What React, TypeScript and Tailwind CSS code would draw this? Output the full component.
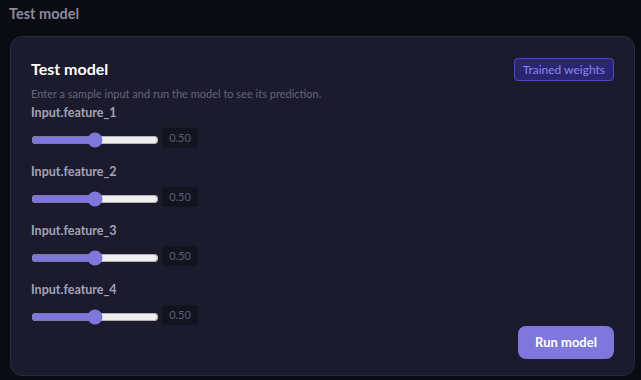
import { useState } from 'react'

const features = ['Input.feature_1', 'Input.feature_2', 'Input.feature_3', 'Input.feature_4']

function FeatureSlider({ name }: { name: string }) {
  const [value, setValue] = useState(0.5)
  return (
    <div className="flex flex-col">
      <label className="text-[12.5px] font-bold leading-4 text-[#a3a3b8]">{name}</label>
      <div className="mt-[6px] flex items-start gap-[2px]">
        <input
          type="range"
          min={0}
          max={1}
          step={0.01}
          value={value}
          onChange={(e) => setValue(Number(e.target.value))}
          className="mt-[5px] h-[16px] w-[128px] accent-[#8077dd]"
        />
        <div className="flex h-[22px] w-[38px] items-center justify-center rounded-[4px] border border-[#1c1c2c] bg-[#141421] text-[11px] text-[#5f5f72]">
          {value.toFixed(2)}
        </div>
      </div>
    </div>
  )
}

export default function App() {
  return (
    <div
      className="flex h-[380px] flex-col bg-[#0b0b12] pl-[10px] pr-[6px]"
      style={{ fontFamily: 'Lato, "Noto Sans", sans-serif' }}
    >
      <div className="flex h-[36px] items-start pt-[5px]">
        <span className="-ml-[1px] text-[14.5px] font-bold leading-[18px] text-[#8a8a9c]">Test model</span>
      </div>
      <div className="flex h-[340px] flex-col rounded-[12px] border border-[#2a2a42] bg-[#1b1b2d] px-[20px] pt-[20px]">
        <div className="flex items-start justify-between">
          <h2 className="text-[16px] font-bold leading-6 text-white">Test model</h2>
          <span className="mt-[1px] rounded-[4px] border border-[#5048c0] bg-[#2a2670] px-[8px] text-[12px] leading-[21px] text-[#8d86f0]">
            Trained weights
          </span>
        </div>
        <p className="mt-[5px] text-[11px] leading-4 text-[#66667c]">
          Enter a sample input and run the model to see its prediction.
        </p>
        <div className="mt-[3px] flex flex-col gap-[15px]">
          {features.map((f) => (
            <FeatureSlider key={f} name={f} />
          ))}
        </div>
        <div className="flex justify-end">
          <button className="h-[33px] w-[96px] rounded-[8px] bg-[#8077dd] text-[13px] font-bold text-white">
            Run model
          </button>
        </div>
      </div>
    </div>
  )
}
